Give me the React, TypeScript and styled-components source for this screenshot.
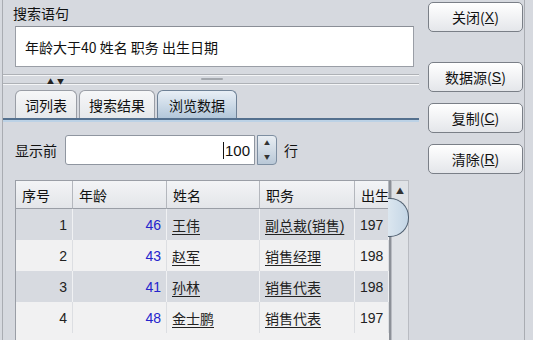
import React from "react";
import styled, { createGlobalStyle } from "styled-components";

const GlobalStyle = createGlobalStyle`
  body {
    margin: 0;
    background: #d6d9df;
    font-family: "Noto Sans CJK SC", "Liberation Sans", sans-serif;
    color: #111;
  }
`;

interface IRow {
  no: number;
  age: number;
  name: string;
  title: string;
  born: string;
}

const rows: IRow[] = [
  { no: 1, age: 46, name: "王伟", title: "副总裁(销售)", born: "197" },
  { no: 2, age: 43, name: "赵军", title: "销售经理", born: "198" },
  { no: 3, age: 41, name: "孙林", title: "销售代表", born: "198" },
  { no: 4, age: 48, name: "金士鹏", title: "销售代表", born: "197" },
];

const Window = styled.div`
  display: flex;
  width: 533px;
  height: 340px;
  overflow: hidden;
  background: #d6d9df;
`;

const LeftPanel = styled.div`
  display: flex;
  flex-direction: column;
  width: 416px;
  margin-left: 2px;
  border-left: 1px solid #a9acb2;
`;

const Title = styled.div`
  height: 27px;
  line-height: 26px;
  padding-left: 10px;
  font-size: 14px;
`;

const QueryBox = styled.div`
  margin-left: 12px;
  width: 388px;
  height: 41px;
  background: #fff;
  border: 1px solid #9a9ea6;
  border-top-color: #8a8e96;
  display: flex;
  align-items: center;
  padding-left: 9px;
  font-size: 14px;
  box-sizing: content-box;
`;

const Splitter = styled.div`
  position: relative;
  height: 23px;
  display: flex;
  flex-direction: column;
  justify-content: space-between;
  padding: 7px 0 5px;
  box-sizing: border-box;
`;

const SplitLine = styled.div`
  height: 1px;
  border-top: 1px solid #aeb1b6;
  background: #f4f5f7;
`;

const Arrows = styled.div`
  position: absolute;
  left: 44px;
  top: 9px;
  font-size: 7px;
  letter-spacing: 3px;
  color: #222;
`;

const Grip = styled.div`
  position: absolute;
  left: 198px;
  top: 11px;
  width: 22px;
  height: 2px;
  background: #a3a7ad;
  border-radius: 1px;
`;

const TabBar = styled.div`
  display: flex;
  gap: 2px;
  padding-left: 12px;
  height: 28px;
  align-items: flex-end;
`;

const Tab = styled.div<{ $active?: boolean }>`
  height: 28px;
  padding: 0 ${(p) => (p.$active ? 11 : 9)}px;
  display: flex;
  align-items: center;
  font-size: 14px;
  border: 1px solid ${(p) => (p.$active ? "#6e8196" : "#9a9ea6")};
  border-bottom: none;
  border-radius: 6px 6px 0 0;
  background: ${(p) =>
    p.$active
      ? "linear-gradient(#e8eff6, #b3c7da)"
      : "linear-gradient(#f6f7f8, #e6e8eb)"};
  box-sizing: border-box;
`;

const TabRule = styled.div`
  height: 2px;
  background: #54708e;
  border-bottom: 2px solid #bcd2e6;
`;

const SpinRow = styled.div`
  display: flex;
  align-items: center;
  margin-top: 13px;
  padding-left: 12px;
  height: 30px;
  font-size: 14px;
`;

const SpinInput = styled.div`
  margin-left: 8px;
  width: 190px;
  height: 30px;
  box-sizing: border-box;
  background: #fff;
  border: 1px solid #8f96a0;
  border-radius: 3px 0 0 3px;
  display: flex;
  align-items: center;
  justify-content: flex-end;
  padding-right: 4px;
  font-family: "Liberation Sans", sans-serif;
  font-size: 15px;
`;

const Caret = styled.span`
  display: inline-block;
  width: 1px;
  height: 17px;
  background: #111;
  margin-right: 1px;
`;

const SpinButtons = styled.div`
  margin-left: 2px;
  width: 20px;
  height: 30px;
  box-sizing: border-box;
  border: 1px solid #7d8ea1;
  border-radius: 0 4px 4px 0;
  background: linear-gradient(#e9eef3, #b9c8d7);
  display: flex;
  flex-direction: column;
  align-items: center;
  justify-content: space-around;
  font-size: 6px;
  color: #333;
  line-height: 1;
`;

const RowSuffix = styled.span`
  margin-left: 7px;
`;

const TableArea = styled.div`
  display: flex;
  margin-top: 15px;
  margin-left: 12px;
`;

const Table = styled.div`
  width: 373px;
  border: 1px solid #9a9ea6;
  border-right: 2px solid #8d9198;
  border-bottom: none;
  background: #f1f1f2;
`;

const Grid = styled.div`
  display: grid;
  grid-template-columns: 57px 94px 93px 95px 34px;
`;

const HeadCell = styled.div`
  height: 27px;
  display: flex;
  align-items: center;
  padding-left: 6px;
  font-size: 14px;
  background: linear-gradient(#f3f4f6, #e3e5e9);
  border-right: 1px solid #b4b7bd;
  border-bottom: 1px solid #9a9ea6;
  white-space: nowrap;
  overflow: hidden;
`;

const Cell = styled.div<{ $odd: boolean; $align?: string; $blue?: boolean; $link?: boolean }>`
  height: 31px;
  display: flex;
  align-items: center;
  justify-content: ${(p) => p.$align || "flex-start"};
  padding: 0 5px;
  font-size: 14px;
  font-family: "Liberation Sans", "Noto Sans CJK SC", sans-serif;
  background: ${(p) => (p.$odd ? "#d7dae0" : "#f1f1f2")};
  color: ${(p) => (p.$blue ? "#2424cc" : "#222")};
  text-decoration: ${(p) => (p.$link ? "underline" : "none")};
  text-underline-offset: 3px;
  border-right: 1px solid ${(p) => (p.$odd ? "#f0f1f3" : "#dcdee2")};
  white-space: nowrap;
  overflow: hidden;
`;

const ScrollBar = styled.div`
  position: relative;
  width: 18px;
  height: 160px;
  border: 1px solid #b9bcc2;
  border-bottom: none;
  background: #dfe2e6;
  box-sizing: border-box;
`;

const UpArrow = styled.div`
  text-align: center;
  font-size: 8px;
  color: #333;
  padding-top: 4px;
`;

const Thumb = styled.div`
  position: absolute;
  left: -4px;
  top: 17px;
  width: 20px;
  height: 37px;
  border: 1.5px solid #4d5d6e;
  border-left: none;
  border-radius: 0 19px 19px 0;
  background: linear-gradient(90deg, #dbe6ef, #c4d6e6);
`;

const ButtonColumn = styled.div`
  display: flex;
  flex-direction: column;
  padding: 2px 0 0 9px;
  width: 96px;
  border-right: 1px solid #a9acb2;
`;

const Button = styled.div<{ $gap?: number }>`
  width: 95px;
  height: 30px;
  box-sizing: border-box;
  margin-top: ${(p) => p.$gap ?? 0}px;
  border: 1px solid #7a7f87;
  border-radius: 5px;
  background: linear-gradient(#ffffff, #e4e6ea);
  display: flex;
  align-items: center;
  justify-content: center;
  font-size: 14px;
`;

const Key = styled.span`
  font-family: "Liberation Sans", sans-serif;
  text-decoration: underline;
`;

const ActionButton: React.FC<{ label: string; hotkey: string; gap?: number }> = ({
  label,
  hotkey,
  gap,
}) => (
  <Button $gap={gap}>
    {label}(<Key>{hotkey}</Key>)
  </Button>
);

export default function App() {
  return (
    <>
      <GlobalStyle />
      <Window>
        <LeftPanel>
          <Title>搜索语句</Title>
          <QueryBox>年龄大于40 姓名 职务 出生日期</QueryBox>
          <Splitter>
            <SplitLine />
            <Arrows>▲▼</Arrows>
            <Grip />
            <SplitLine />
          </Splitter>
          <TabBar>
            <Tab>词列表</Tab>
            <Tab>搜索结果</Tab>
            <Tab $active>浏览数据</Tab>
          </TabBar>
          <TabRule />
          <SpinRow>
            显示前
            <SpinInput>
              <Caret />
              100
            </SpinInput>
            <SpinButtons>
              <span>▲</span>
              <span>▼</span>
            </SpinButtons>
            <RowSuffix>行</RowSuffix>
          </SpinRow>
          <TableArea>
            <Table>
              <Grid>
                <HeadCell>序号</HeadCell>
                <HeadCell>年龄</HeadCell>
                <HeadCell>姓名</HeadCell>
                <HeadCell>职务</HeadCell>
                <HeadCell>出生</HeadCell>
                {rows.map((r, i) => {
                  const odd = i % 2 === 0;
                  return (
                    <React.Fragment key={r.no}>
                      <Cell $odd={odd} $align="flex-end">{r.no}</Cell>
                      <Cell $odd={odd} $align="flex-end" $blue>{r.age}</Cell>
                      <Cell $odd={odd} $link>{r.name}</Cell>
                      <Cell $odd={odd} $link>{r.title}</Cell>
                      <Cell $odd={odd}>{r.born}</Cell>
                    </React.Fragment>
                  );
                })}
              </Grid>
            </Table>
            <ScrollBar>
              <UpArrow>▲</UpArrow>
              <Thumb />
            </ScrollBar>
          </TableArea>
        </LeftPanel>
        <ButtonColumn>
          <ActionButton label="关闭" hotkey="X" />
          <ActionButton label="数据源" hotkey="S" gap={30} />
          <ActionButton label="复制" hotkey="C" gap={11} />
          <ActionButton label="清除" hotkey="R" gap={11} />
        </ButtonColumn>
      </Window>
    </>
  );
}
